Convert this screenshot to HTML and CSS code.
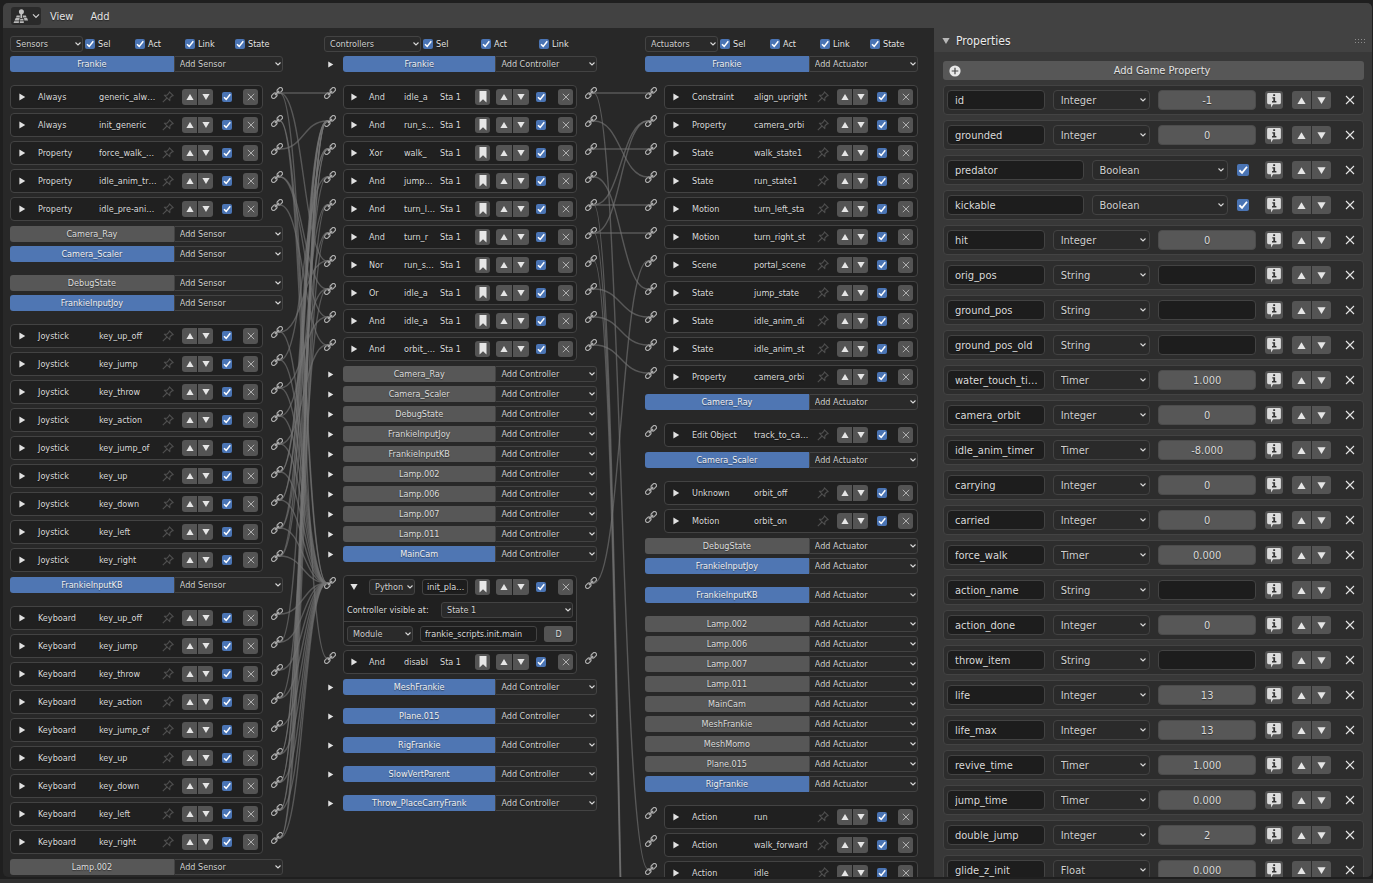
FILE: index.html
```html
<!DOCTYPE html>
<html lang="en">
<head>
<meta charset="utf-8">
<title>Logic Editor</title>
<link rel="stylesheet" href="styles.css">
</head>
<body>
<svg class="sprite" aria-hidden="true">
  <symbol id="i-link" viewBox="0 0 12 12"><g fill="none" stroke="currentColor" stroke-width="1.2" transform="rotate(-45 6 6)"><rect x="-.9" y="4" width="6" height="4" rx="2"/><rect x="6.900" y="4" width="6" height="4" rx="2"/><path d="M3.200 6h5.600" stroke-width="1.600"/></g></symbol>
  <symbol id="i-pin" viewBox="0 0 12 12"><path d="M7.4 .8 11.2 4.6 9.8 5 7.9 6.9 7.8 9.7 2.3 4.2 5.1 4.1 7 2.2ZM5 7 .8 11.2" fill="none" stroke="currentColor" stroke-width="1.1" stroke-linejoin="round"/></symbol>
  <symbol id="i-up" viewBox="0 0 8 8"><path d="M4 1 7.600 7H.4Z" fill="currentColor"/></symbol>
  <symbol id="i-down" viewBox="0 0 8 8"><path d="M4 7 .4 1h7.200Z" fill="currentColor"/></symbol>
  <symbol id="i-right" viewBox="0 0 8 8"><path d="M1.400 .6 7.200 4 1.400 7.400Z" fill="currentColor"/></symbol>
  <symbol id="i-x" viewBox="0 0 10 10"><path d="M1 1l8 8M9 1 1 9" fill="none" stroke="currentColor" stroke-width="1.1"/></symbol>
  <symbol id="i-mark" viewBox="0 0 8 12"><path d="M.5 0h7v11.500L4 8.200.5 11.500Z" fill="currentColor"/></symbol>
  <symbol id="i-info" viewBox="0 0 16 16"><path d="M2.500 1h11a1.400 1.400 0 0 1 1.400 1.400v8.400a1.400 1.400 0 0 1-1.400 1.400H7.200L5 15.400v-3.200H2.500a1.400 1.400 0 0 1-1.400-1.400V2.400A1.400 1.400 0 0 1 2.500 1Z" fill="#dcdcdc"/><path d="M7.200 2.300h1.900v1.800H7.200ZM6.300 5.200h2.800v3.900h1.300v1.300H6V9.100h1.300V6.400h-1Z" fill="#333"/></symbol>
  <symbol id="i-add" viewBox="0 0 12 12"><circle cx="6" cy="6" r="5.600" fill="#e8e8e8"/><path d="M6 2.700v6.600M2.700 6h6.600" stroke="#444" stroke-width="1.200"/></symbol>
</svg>

<div class="window">
  <header class="menubar">
    <button class="editor-type" aria-label="Editor type">
      <svg width="16" height="16" viewBox="0 0 16 16" aria-hidden="true"><circle cx="8.400" cy="3.800" r="2.500" fill="#c4c4c4"/><path d="M8.300 5v5" stroke="#c4c4c4" stroke-width="1.800"/><path d="M4.200 7.800h2.600M3.700 7.600h3.100v2H3ZM10 7.600h2.800l.9 2H10ZM2.700 10.100h4l-.5 2.500H1.500ZM7.300 10.800h3l.3 1.800H7ZM11 10.100h3.100l1 2.500h-3.700ZM1.200 13.200h4.800l-.2 1.700H.5ZM6.800 13.200h4v1.700h-4Z" fill="#b8b8b8"/></svg>
      <svg width="8" height="6" viewBox="0 0 8 6" aria-hidden="true"><path d="M1 1.300 4 4.400 7 1.300" fill="none" stroke="#d0d0d0" stroke-width="1.200"/></svg>
    </button>
    <button class="menu">View</button>
    <button class="menu">Add</button>
  </header>
  <main class="body">
    <section class="logic" id="logic">
      <svg class="wires" id="wires" aria-hidden="true"></svg>
      <div class="column sensors" id="sensors"></div>
      <div class="column controllers" id="controllers"></div>
      <div class="column actuators" id="actuators"></div>
    </section>
    <aside class="sidebar">
      <header class="panel-head">
        <svg class="tri" width="8" height="8"><use href="#i-down"/></svg>
        <h2>Properties</h2>
        <span class="grip"></span>
      </header>
      <div class="panel" id="properties">
        <button class="add-prop"><svg width="12" height="12"><use href="#i-add"/></svg><span>Add Game Property</span></button>
      </div>
    </aside>
  </main>
</div>
<footer class="strip"></footer>
<script src="script.js"></script>
</body>
</html>
```
FILE: styles.css
```css
* { box-sizing: border-box; }

html, body { height: 100%; }

body {
  margin: 0;
  padding: 3px 0 0 3px;
  display: flex;
  flex-direction: column;
  gap: 2px;
  overflow: hidden;
  background: #1f1f1f;
  color: #dadada;
  font-family: "DejaVu Sans Condensed", "DejaVu Sans", sans-serif;
  font-size: 9px;
  text-shadow: 0 1px 1px rgba(0, 0, 0, .45);
}

button, input, select {
  margin: 0;
  border: 0;
  padding: 0;
  min-width: 0;
  color: inherit;
  font: inherit;
  text-shadow: inherit;
}

svg { display: block; flex: none; }
.sprite { position: absolute; width: 0; height: 0; }

.window {
  flex: 1;
  min-height: 0;
  margin-right: 1px;
  display: flex;
  flex-direction: column;
  overflow: hidden;
  border-radius: 5px;
  background: #282828;
}

.strip { height: 4px; flex: none; margin-left: -3px; background: #303030; }

/* Menu bar */
.menubar {
  height: 25px;
  flex: none;
  display: flex;
  align-items: center;
  padding: 1px 0 0 8px;
  background: #424242;
  font-size: 11px;
}
.editor-type {
  width: 30px;
  height: 18px;
  display: flex;
  align-items: center;
  justify-content: center;
  gap: 3px;
  border-radius: 3px;
  background: #2a2a2a;
}
.menu { padding: 1px 8px 0 9px; background: none; color: #e4e4e4; }

.body { flex: 1; min-height: 0; display: flex; }

/* Logic bricks */
.logic {
  position: relative;
  flex: 1;
  min-width: 0;
  display: grid;
  grid-template-columns: minmax(0, 1fr) 41px minmax(0, 1fr) 48px minmax(0, 1fr);
  align-items: start;
  padding: 8px 16px 0 7px;
  overflow: hidden;
}
.sensors { grid-column: 1; }
.controllers { grid-column: 3; }
.actuators { grid-column: 5; }
.column { grid-row: 1; display: flex; flex-direction: column; gap: 4px; }

.wires {
  position: absolute;
  inset: 0;
  width: 100%;
  height: 100%;
  fill: none;
  stroke: #767676;
  stroke-opacity: .62;
  stroke-width: 1.4;
  pointer-events: none;
}

.filters { display: grid; grid-template-columns: 73px repeat(4, 50px); height: 16px; }
.controllers .filters { grid-template-columns: 97px repeat(3, 58px); }
.filters label { display: flex; align-items: center; gap: 3px; padding-left: 2px; color: #e4e4e4; }

select {
  appearance: none;
  border: 1px solid #434343;
  border-radius: 3px;
  padding-left: 5px;
  color: #cfcfcf;
  background: #2a2a2a url("data:image/svg+xml,%3Csvg xmlns='http://www.w3.org/2000/svg' width='8' height='6'%3E%3Cpath d='M1.500 1.500 4 4 6.500 1.500' fill='none' stroke='%23d8d8d8' stroke-width='1.100'/%3E%3C/svg%3E") no-repeat right 0 center;
}

input[type="checkbox"] {
  appearance: none;
  flex: none;
  width: 10px;
  height: 10px;
  border-radius: 2px;
  background: #545454;
}
input[type="checkbox"]:checked {
  background: #4a74b4 url("data:image/svg+xml,%3Csvg xmlns='http://www.w3.org/2000/svg' viewBox='0 0 10 10'%3E%3Cpath d='M2 5.200 4.200 7.400 8.300 2.300' fill='none' stroke='white' stroke-width='1.500'/%3E%3C/svg%3E") center / 100% 100% no-repeat;
}

.object { display: grid; grid-template-columns: minmax(0, 3fr) minmax(0, 2fr); height: 16px; }
.controllers .object { grid-template-columns: 19px minmax(0, 3fr) minmax(0, 2fr); }
.object.open { margin-bottom: 9px; }
.object .twist { padding-left: 3px; display: flex; align-items: center; background: none; }
.object .name { border-radius: 3px 0 0 3px; background: #575757; color: #dcdcdc; }
.object.selected .name { background: #4f76b3; color: #f0f0f0; }
.object select { border-radius: 0 3px 3px 0; }

.bricks { display: flex; flex-direction: column; gap: 4px; margin-bottom: 1px; }
.brick { display: flex; align-items: flex-start; }
.socket { padding-top: 2px; color: #adadad; }
.socket.in { width: 19px; }
.socket.out { width: 20px; display: flex; justify-content: flex-end; }

.box { flex: 1; min-width: 0; border: 1px solid #434343; border-radius: 4px; background: #202020; }
.line { display: grid; align-items: center; height: 22px; padding-right: 4px; white-space: nowrap; }
.sensors .line { grid-template-columns: 27px 61px minmax(0, 1fr) 26px 31px 28px 17px; }
.actuators .line { grid-template-columns: 27px 62px minmax(0, 1fr) 26px 31px 28px 17px; }
.controllers .line { grid-template-columns: 25px 35px 36px minmax(0, 1fr) 21px 33px 24px 20px; }
.controllers .open-box .line:first-child { grid-template-columns: 25px minmax(0, 1fr) 21px 33px 24px 20px; }
.controllers .line { padding-right: 3px; }

.twist svg { color: #e2e2e2; }
.line .twist { width: 16px; margin-left: 7px; background: none; }
.controllers .line .twist { margin-left: 6px; }
.pin { color: #4f4f4f; padding-left: 6px; background: none; }
.line input[type="checkbox"] { justify-self: center; }

.icon-btn {
  height: 16px;
  display: flex;
  align-items: center;
  justify-content: center;
  border-radius: 3px;
  background: #545454;
  color: #e6e6e6;
}
.mark { width: 15px; }
.line .close { width: 15px; justify-self: end; color: #bdbdbd; }
.arrows { display: grid; grid-template-columns: 1fr 1fr; gap: 1px; }
.arrows .icon-btn:first-child { border-radius: 3px 0 0 3px; }
.arrows .icon-btn:last-child { border-radius: 0 3px 3px 0; }

.duo { display: grid; grid-template-columns: 1fr 1fr; gap: 7px; padding-right: 7px; }
.duo select, .duo input, .state select, .module > * { height: 16px; }
.box input[type="text"] { border: 1px solid #434343; border-radius: 3px; background: #1d1d1d; padding: 0 4px; }
.box .duo input[type="text"] { padding: 0 0 0 4px; }
.state, .module { height: 23px; padding: 0 3px; display: grid; align-items: center; }
.state { grid-template-columns: 94px minmax(0, 1fr); }
.module { grid-template-columns: 66px minmax(0, 1fr) 29px; gap: 7px; border-top: 1px solid #434343; height: 24px; }
.module button { border-radius: 3px; background: #545454; }

/* Sidebar */
.sidebar { flex: 0 0 438px; display: flex; flex-direction: column; overflow: hidden; background: #383838; font-size: 11px; }
.panel-head { height: 24px; flex: none; display: flex; align-items: center; gap: 6px; padding: 2px 7px 0 8px; background: #424242; }
.panel-head h2 { flex: 1; margin: 0; font-size: 12px; font-weight: 400; color: #ececec; }
.tri { color: #b8b8b8; }
.grip {
  width: 10px;
  height: 4px;
  background:
    linear-gradient(transparent 1px, #424242 1px) 0 0 / 3px 3px,
    repeating-linear-gradient(90deg, #8c8c8c 0 1px, transparent 1px 3px);
}

.panel { display: flex; flex-direction: column; gap: 5px; padding: 9px 8px 0 9px; }
.add-prop { flex: none; height: 19px; display: grid; grid-template-columns: 12px 1fr; align-items: center; padding: 0 1px 0 6px; border-radius: 3px; background: #575757; color: #e4e4e4; }

.prop {
  flex: none;
  height: 30px;
  display: grid;
  grid-template-columns: minmax(0, 1fr) 18px 39px 20px;
  gap: 9px;
  align-items: center;
  padding: 0 3px;
  border: 1px solid #434343;
  border-radius: 4px;
  background: #2d2d2d;
}
.fields { display: grid; grid-template-columns: repeat(3, minmax(0, 1fr)); gap: 8px; }
.fields.boolean { grid-template-columns: repeat(2, minmax(0, 1fr)) 20px; }
.fields > * { height: 20px; border-radius: 4px; }
.fields select { padding-left: 7px; background-position: right 2px center; }
.fields input[type="text"] { border: 1px solid #434343; background: #1d1d1d; padding: 0 7px; }
.fields input[type="text"].number { border-color: #4c4c4c; background: #575757; text-align: center; }
.check { display: flex; align-items: center; padding-left: 1px; }
.check input[type="checkbox"] { width: 12px; height: 12px; }
.prop .icon-btn { height: 18px; }
.prop .close { background: none; }
```
FILE: script.js
```js
const icon = (id, w, h = w) => `<svg width="${w}" height="${h}" aria-hidden="true"><use href="#i-${id}"/></svg>`;

const arrows = (s) => `<div class="arrows"><button class="icon-btn" aria-label="Move up">${icon('up', s)}</button><button class="icon-btn" aria-label="Move down">${icon('down', s)}</button></div>`;
const active = `<input type="checkbox" checked aria-label="Active">`;
const close = `<button class="icon-btn close" aria-label="Remove">${icon('x', 8)}</button>`;
const twist = (dir = 'right', s = 8) => `<button class="twist" aria-label="Expand">${icon(dir, s)}</button>`;
const pin = `<button class="pin" aria-label="Pin">${icon('pin', 12)}</button>`;
const mark = `<button class="icon-btn mark" aria-label="Priority">${icon('mark', 8, 12)}</button>`;
const select = (value, label) => `<select aria-label="${label}"><option>${value}</option></select>`;
const socket = (side) => `<span class="socket ${side}">${icon('link', 12)}</span>`;

const filters = (kind, names) => `<div class="filters">${select(kind, 'View')}${names.map((n) => `<label><input type="checkbox" checked>${n}</label>`).join('')}</div>`;

// An object row: a leading "*" marks a selected object, a trailing "+" leaves room under it.
function object(spec, kind) {
  const selected = spec.startsWith('*');
  const open = spec.endsWith('+');
  const name = spec.replace(/^\*|\+$/g, '');
  return `<div class="object${selected ? ' selected' : ''}${open ? ' open' : ''}">${kind === 'Controller' ? twist('right', 7) : ''}<button class="name">${name}</button>${select('Add ' + kind, 'Add ' + kind)}</div>`;
}

const brick = {
  Sensor: ([type, name]) => `<div class="brick"><div class="box"><div class="line">${twist()}<span>${type}</span><span>${name}</span>${pin}${arrows(8)}${active}${close}</div></div>${socket('out')}</div>`,
  Actuator: ([type, name]) => `<div class="brick">${socket('in')}<div class="box"><div class="line">${twist()}<span>${type}</span><span>${name}</span>${pin}${arrows(8)}${active}${close}</div></div></div>`,
  Controller: ([type, name, module]) => `<div class="brick">${socket('in')}${module ? openController(type, name, module) : `<div class="box"><div class="line">${twist()}<span>${type}</span><span>${name}</span><span>Sta 1</span>${mark}${arrows(8)}${active}${close}</div></div>`}${socket('out')}</div>`,
};

function openController(type, name, module) {
  return `<div class="box open-box">
    <div class="line">${twist('down')}<div class="duo">${select(type, 'Type')}<input type="text" aria-label="Name" value="${name}"></div>${mark}${arrows(8)}${active}${close}</div>
    <div class="state"><label for="state">Controller visible at:</label><select id="state"><option>State 1</option></select></div>
    <div class="module">${select('Module', 'Execution')}<input type="text" aria-label="Module" value="${module}"><button>D</button></div>
  </div>`;
}

function column(id, kind, title, names, items) {
  const html = items.map((it) => typeof it === 'string'
    ? object(it, kind)
    : `<div class="bricks">${it.map(brick[kind]).join('')}</div>`);
  document.getElementById(id).innerHTML = filters(title, names) + html.join('');
}

const keys = ['key_up_off', 'key_jump', 'key_throw', 'key_action', 'key_jump_of', 'key_up', 'key_down', 'key_left', 'key_right'];

column('sensors', 'Sensor', 'Sensors', ['Sel', 'Act', 'Link', 'State'], [
  '*Frankie+',
  [['Always', 'generic_alw…'], ['Always', 'init_generic'], ['Property', 'force_walk_…'], ['Property', 'idle_anim_tr…'], ['Property', 'idle_pre-ani…']],
  'Camera_Ray', '*Camera_Scaler+', 'DebugState', '*FrankieInputJoy+',
  keys.map((k) => ['Joystick', k]),
  '*FrankieInputKB+',
  keys.map((k) => ['Keyboard', k]),
  'Lamp.002',
]);

column('controllers', 'Controller', 'Controllers', ['Sel', 'Act', 'Link'], [
  '*Frankie+',
  [['And', 'idle_a'], ['And', 'run_s…'], ['Xor', 'walk_'], ['And', 'jump…'], ['And', 'turn_l…'], ['And', 'turn_r'], ['Nor', 'run_s…'], ['Or', 'idle_a'], ['And', 'idle_a'], ['And', 'orbit_…']],
  'Camera_Ray', 'Camera_Scaler', 'DebugState', 'FrankieInputJoy', 'FrankieInputKB', 'Lamp.002', 'Lamp.006', 'Lamp.007', 'Lamp.011', '*MainCam+',
  [['Python', 'init_pla…', 'frankie_scripts.init.main'], ['And', 'disabl']],
  '*MeshFrankie+', '*Plane.015+', '*RigFrankie+', '*SlowVertParent+', '*Throw_PlaceCarryFrank+',
]);

column('actuators', 'Actuator', 'Actuators', ['Sel', 'Act', 'Link', 'State'], [
  '*Frankie+',
  [['Constraint', 'align_upright'], ['Property', 'camera_orbi'], ['State', 'walk_state1'], ['State', 'run_state1'], ['Motion', 'turn_left_sta'], ['Motion', 'turn_right_st'], ['Scene', 'portal_scene'], ['State', 'jump_state'], ['State', 'idle_anim_di'], ['State', 'idle_anim_st'], ['Property', 'camera_orbi']],
  '*Camera_Ray+',
  [['Edit Object', 'track_to_ca…']],
  '*Camera_Scaler+',
  [['Unknown', 'orbit_off'], ['Motion', 'orbit_on']],
  'DebugState', '*FrankieInputJoy+', '*FrankieInputKB+',
  'Lamp.002', 'Lamp.006', 'Lamp.007', 'Lamp.011', 'MainCam', 'MeshFrankie', 'MeshMomo', 'Plane.015', '*RigFrankie+',
  [['Action', 'run'], ['Action', 'walk_forward'], ['Action', 'idle']],
]);

// Game properties
const properties = [
  ['id', 'Integer', '-1'], ['grounded', 'Integer', '0'], ['predator', 'Boolean'], ['kickable', 'Boolean'],
  ['hit', 'Integer', '0'], ['orig_pos', 'String', ''], ['ground_pos', 'String', ''], ['ground_pos_old', 'String', ''],
  ['water_touch_ti…', 'Timer', '1.000'], ['camera_orbit', 'Integer', '0'], ['idle_anim_timer', 'Timer', '-8.000'],
  ['carrying', 'Integer', '0'], ['carried', 'Integer', '0'], ['force_walk', 'Timer', '0.000'], ['action_name', 'String', ''],
  ['action_done', 'Integer', '0'], ['throw_item', 'String', ''], ['life', 'Integer', '13'], ['life_max', 'Integer', '13'],
  ['revive_time', 'Timer', '1.000'], ['jump_time', 'Timer', '0.000'], ['double_jump', 'Integer', '2'], ['glide_z_init', 'Float', '0.000'],
];

function property([name, type, value]) {
  const field = type === 'Boolean'
    ? `<span class="check"><input type="checkbox" checked aria-label="${name} value"></span>`
    : `<input type="text" class="${type === 'String' ? 'string' : 'number'}" value="${value}" aria-label="${name} value">`;
  return `<div class="prop"><div class="fields${type === 'Boolean' ? ' boolean' : ''}"><input type="text" value="${name}" aria-label="Name">${select(type, 'Type')}${field}</div><button class="icon-btn" aria-label="Show debug info">${icon('info', 16)}</button>${arrows(9)}<button class="icon-btn close" aria-label="Remove">${icon('x', 10)}</button></div>`;
}
document.getElementById('properties').insertAdjacentHTML('beforeend', properties.map(property).join(''));

// Wires: sensor index to controller indexes, controller index to actuator indexes.
const PY = 10;
const sensorLinks = [
  [0, PY, 6], [PY, 11], [1], [7, 8], [9],
  [PY, 6], [3, PY], [PY, 8], [7, PY], [PY, 9], [1, 2, PY], [1, 2, PY], [1, 4, PY], [1, 5, PY],
  [PY], [3, PY], [PY], [7, PY], [PY], [1, 2, PY], [1, 2, PY], [1, 4, PY], [1, 5, PY],
];
const controllerLinks = [[0, 16], [3], [2], [7], [4, 1, 'below'], [5, 1, 'below'], ['below'], [8], [9], [10], [6], []];

function drawWires() {
  const base = document.getElementById('logic').getBoundingClientRect();
  const points = (selector, dx) => [...document.querySelectorAll(selector)].map((el) => {
    const r = el.getBoundingClientRect();
    return [r.left - base.left + 6 + dx, r.top - base.top + 6];
  });
  const curve = (a, b) => {
    const mid = (a[0] + b[0]) / 2;
    return `<path d="M${a[0]} ${a[1]}C${mid} ${a[1]} ${mid} ${b[1]} ${b[0]} ${b[1]}"/>`;
  };
  const connect = (links, from, to) => links.flatMap((targets, i) => targets.map((t) =>
    curve(from[i], t === 'below' ? [to[0][0], 1550] : to[t])));
  const paths = [
    ...connect(sensorLinks, points('.sensors .out svg', 3), points('.controllers .in svg', -3)),
    ...connect(controllerLinks, points('.controllers .out svg', 3), points('.actuators .in svg', -3)),
  ];
  document.getElementById('wires').innerHTML = paths.join('');
}
drawWires();
window.addEventListener('resize', drawWires);
```
